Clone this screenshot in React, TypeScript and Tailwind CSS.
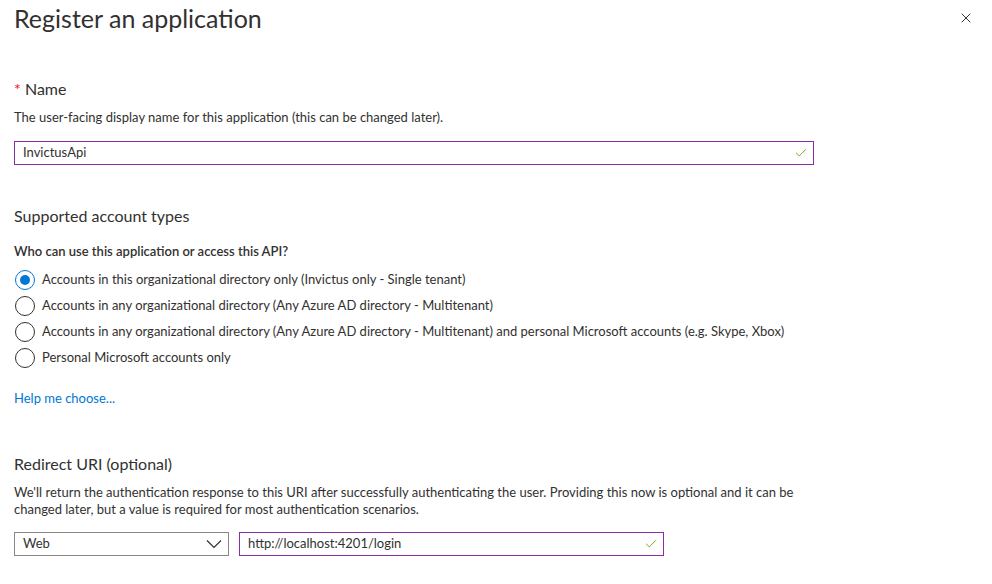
import { X, Check } from 'lucide-react';

const font = { fontFamily: '"Segoe UI", Lato, "Liberation Sans", sans-serif' };

const options = [
  'Accounts in this organizational directory only (Invictus only - Single tenant)',
  'Accounts in any organizational directory (Any Azure AD directory - Multitenant)',
  'Accounts in any organizational directory (Any Azure AD directory - Multitenant) and personal Microsoft accounts (e.g. Skype, Xbox)',
  'Personal Microsoft accounts only',
];

const Radio = ({ checked, label }: { checked: boolean; label: string }) => (
  <label className="flex h-[26px] items-center gap-[7px]">
    <span
      className={`flex h-[20px] w-[20px] items-center justify-center rounded-full border ${
        checked ? 'border-[#0078d4]' : 'border-[#323130]'
      }`}
    >
      {checked && <span className="h-[10px] w-[10px] rounded-full bg-[#0078d4]" />}
    </span>
    <span className="text-[13px] text-[#323130]">{label}</span>
  </label>
);

const App = () => {
  return (
    <div className="relative h-[584px] w-[992px] overflow-hidden bg-white px-[14px] text-[#323130]" style={font}>
      <button className="absolute right-[18px] top-[10px] text-[#323130]">
        <X size={16} strokeWidth={1.5} />
      </button>

      <h1 className="pt-[1px] text-[25px] font-normal leading-[34px] text-[#323130]">Register an application</h1>

      <section className="mt-[44px]">
        <h2 className="text-[16px] leading-[20px]">
          <span className="text-[#e81123]">*</span> Name
        </h2>
        <p className="mt-[10px] text-[13px] leading-[17px]">
          The user-facing display name for this application (this can be changed later).
        </p>
        <div className="mt-[15px] flex h-[24px] w-[800px] items-center justify-between border border-[#8a2da5] pl-[8px] pr-[5px]">
          <span className="text-[13px]">InvictusApi</span>
          <Check size={14} strokeWidth={1.5} className="text-[#57a300]" />
        </div>
      </section>

      <section className="mt-[41px]">
        <h2 className="text-[16px] leading-[20px]">Supported account types</h2>
        <p className="mt-[16px] text-[13px] font-semibold leading-[18px]">
          Who can use this application or access this API?
        </p>
        <div className="mt-[7px] flex flex-col pl-[1px]">
          {options.map((o, i) => (
            <Radio key={o} checked={i === 0} label={o} />
          ))}
        </div>
        <a className="mt-[19px] block text-[13px] leading-[17px] text-[#0078d4]">Help me choose...</a>
      </section>

      <section className="mt-[47px]">
        <h2 className="text-[16px] leading-[20px]">Redirect URI (optional)</h2>
        <p className="mt-[10px] w-[800px] text-[13px] leading-[17px]">
          We&apos;ll return the authentication response to this URI after successfully authenticating the user.
          Providing this now is optional and it can be changed later, but a value is required for most authentication
          scenarios.
        </p>
        <div className="mt-[14px] flex gap-[10px]">
          <div className="flex h-[24px] w-[215px] items-center justify-between border border-[#8a8886] pl-[8px] pr-[6px]">
            <span className="text-[13px]">Web</span>
            <svg width="16" height="10" viewBox="0 0 16 10" fill="none" stroke="#323130" strokeWidth="1.2">
              <polyline points="1,1.5 8,8.5 15,1.5" />
            </svg>
          </div>
          <div className="flex h-[24px] w-[425px] items-center justify-between border border-[#8a2da5] pl-[8px] pr-[5px]">
            <span className="text-[13px]">http://localhost:4201/login</span>
            <Check size={14} strokeWidth={1.5} className="text-[#57a300]" />
          </div>
        </div>
      </section>
    </div>
  );
};

export default App;
